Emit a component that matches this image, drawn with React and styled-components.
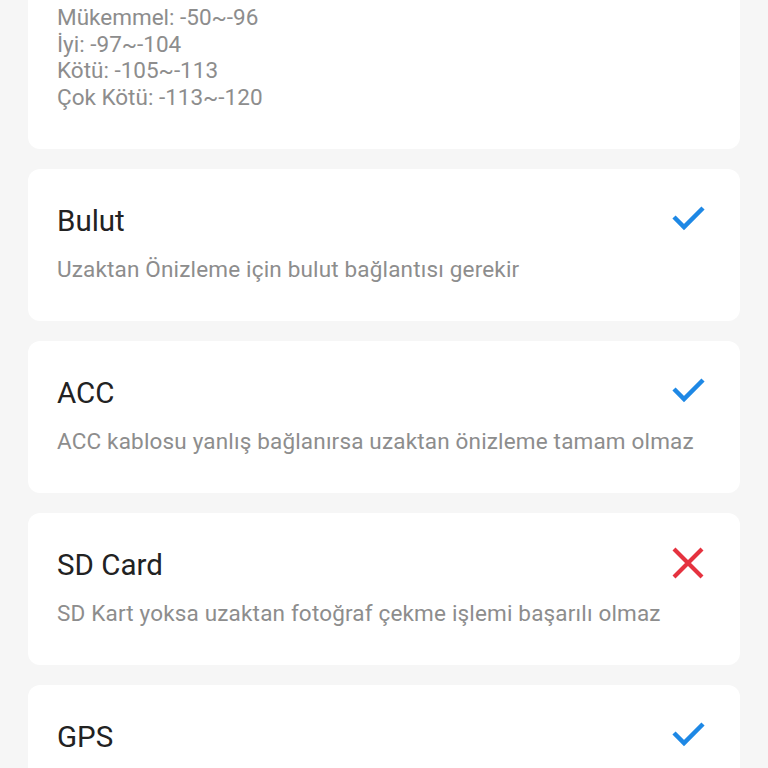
import React from 'react'
import styled, { createGlobalStyle } from 'styled-components'

const GlobalStyle = createGlobalStyle`
    html, body {
        margin: 0;
        padding: 0;
        background: #f6f6f6;
        font-family: Roboto, "Noto Sans", "Liberation Sans", sans-serif;
        overflow: hidden;
    }
`

const Page = styled.div`
    display: flex;
    flex-direction: column;
    gap: 20px;
    padding: 0 28px;
    height: 768px;
    overflow: hidden;
`

const Card = styled.div`
    background: #ffffff;
    border-radius: 12px;
    padding: ${props => props.$top ? '24px 29px 38px' : '34px 29px 0'};
    height: ${props => props.$top ? 'auto' : '152px'};
    margin-top: ${props => props.$top ? '-20px' : '0'};
    box-sizing: border-box;
    flex-shrink: 0;
`

const RangeLine = styled.div`
    font-size: 22.5px;
    line-height: 26.7px;
    color: #8d8d8d;
    white-space: nowrap;
`

const Row = styled.div`
    display: flex;
    align-items: center;
    justify-content: space-between;
`

const Title = styled.div`
    font-size: 29.5px;
    line-height: 36px;
    color: #222222;
`

const Note = styled.div`
    margin-top: 16px;
    font-size: 22.5px;
    line-height: 28px;
    letter-spacing: 0.17px;
    color: #8d8d8d;
    white-space: nowrap;
`

const StatusIcon = styled.div`
    width: 36px;
    height: 36px;
    display: flex;
    align-items: center;
    justify-content: center;
    margin-right: 5px;
    margin-top: -4px;
`

const Check = () => (
    <svg width='36' height='36' viewBox='0 0 36 36'>
        <path d='M4 16 L14 26 L33 7' fill='none' stroke='#1e88e5' strokeWidth='4.5' strokeLinejoin='miter' />
    </svg>
)

const Cross = () => (
    <svg width='36' height='36' viewBox='0 0 36 36'>
        <path d='M4 4 L32 32 M32 4 L4 32' fill='none' stroke='#e5323f' strokeWidth='4.2' />
    </svg>
)

const items = [
    { title: 'Bulut', note: 'Uzaktan Önizleme için bulut bağlantısı gerekir', ok: true },
    { title: 'ACC', note: 'ACC kablosu yanlış bağlanırsa uzaktan önizleme tamam olmaz', ok: true },
    { title: 'SD Card', note: 'SD Kart yoksa uzaktan fotoğraf çekme işlemi başarılı olmaz', ok: false },
    { title: 'GPS', note: 'GPS sinyali yoksa konum bilgisi alınamaz', ok: true },
]

const App = () => {
    return (
        <Page>
            <GlobalStyle />
            <Card $top>
                <RangeLine>Mükemmel: -50~-96</RangeLine>
                <RangeLine>İyi: -97~-104</RangeLine>
                <RangeLine>Kötü: -105~-113</RangeLine>
                <RangeLine>Çok Kötü: -113~-120</RangeLine>
            </Card>
            {items.map(item => (
                <Card key={item.title}>
                    <Row>
                        <Title>{item.title}</Title>
                        <StatusIcon>{item.ok ? <Check /> : <Cross />}</StatusIcon>
                    </Row>
                    <Note>{item.note}</Note>
                </Card>
            ))}
        </Page>
    )
}

export default App
